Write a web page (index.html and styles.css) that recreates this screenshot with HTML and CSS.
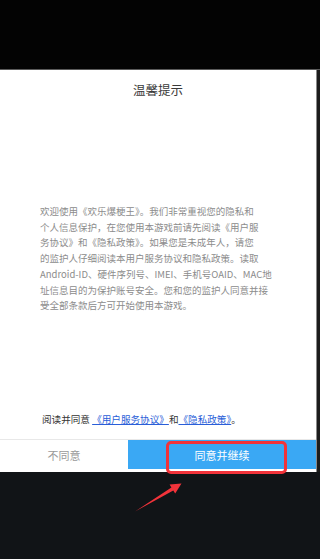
FILE: index.html
```html
<!DOCTYPE html>
<html lang="zh">
<head>
<meta charset="utf-8">
<link rel="stylesheet" href="styles.css">
</head>
<body>
<div class="screen">
  <div class="top"></div>
  <div class="middle">
    <div class="panel">
      <div class="title">温馨提示</div>
      <div class="content">
        <p class="body">欢迎使用《欢乐爆梗王》。我们非常重视您的隐私和<br>个人信息保护，在您使用本游戏前请先阅读《用户服<br>务协议》和《隐私政策》。如果您是未成年人，请您<br>的监护人仔细阅读本用户服务协议和隐私政策。读取<br>Android-ID、硬件序列号、IMEI、手机号OAID、MAC地<br>址信息目的为保护账号安全。您和您的监护人同意并接<br>受全部条款后方可开始使用本游戏。</p>
        <p class="agree">阅读并同意 <a class="link">《用户服务协议》</a>和<a class="link">《隐私政策》</a>。</p>
      </div>
      <div class="actions">
        <div class="btn btn-no">不同意</div>
        <div class="btn btn-yes">同意并继续</div>
      </div>
    </div>
    <div class="edge"></div>
  </div>
  <div class="bottom"></div>
  <div class="highlight"></div>
  <svg class="arrow" viewBox="130 478 56 38" width="56" height="38">
    <polygon points="135,511.5 171.4,487.6 169.6,484.6 181.5,483.6 175.2,493.6 173.3,490.6" fill="#f2333a"/>
  </svg>
</div>
</body>
</html>
```

FILE: styles.css
```css
* { box-sizing: border-box; }
html, body { margin: 0; padding: 0; }
body {
  width: 320px;
  height: 559px;
  overflow: hidden;
  background: #000;
  font-family: "Noto Sans CJK SC", "Noto Sans", sans-serif;
}
.screen {
  position: relative;
  width: 320px;
  height: 559px;
  display: flex;
  flex-direction: column;
}
.top {
  height: 70px;
  background: #030303;
  border-bottom: 1px solid #5a5a5a;
}
.middle {
  display: flex;
  height: 402px;
}
.panel {
  width: 316px;
  background: #fff;
  display: flex;
  flex-direction: column;
  padding-bottom: 3px;
}
.edge {
  flex: 1;
  background: #1c1c1c;
  border-left: 1px solid #8a8a8a;
}
.title {
  text-align: center;
  font-size: 12.5px;
  line-height: 20px;
  color: #3a3a3a;
  margin-top: 10px;
}
.content {
  flex: 1;
  display: flex;
  flex-direction: column;
}
.body {
  margin: 104px 0 0 40px;
  font-size: 9.5px;
  line-height: 15.7px;
  color: #8c8c8c;
  white-space: nowrap;
}
.agree {
  margin: auto 0 12px 42px;
  font-size: 9.6px;
  line-height: 16px;
  color: #333;
  white-space: nowrap;
}
.link {
  color: #2a5ed8;
  text-decoration: underline;
}
.actions {
  display: flex;
  height: 30px;
  border-top: 1px solid #e8e8e8;
}
.btn {
  display: flex;
  align-items: center;
  justify-content: center;
  font-size: 11px;
}
.btn-no {
  width: 128px;
  color: #9a9a9a;
  background: #fff;
}
.btn-yes {
  flex: 1;
  background: #3aa8f4;
  color: #fff;
}
.bottom {
  flex: 1;
  background: #111417;
}
.highlight {
  position: absolute;
  left: 166px;
  top: 441px;
  width: 121px;
  height: 33px;
  border: 3px solid #f2333a;
  border-radius: 5px;
}
.arrow {
  position: absolute;
  left: 130px;
  top: 478px;
}
```
